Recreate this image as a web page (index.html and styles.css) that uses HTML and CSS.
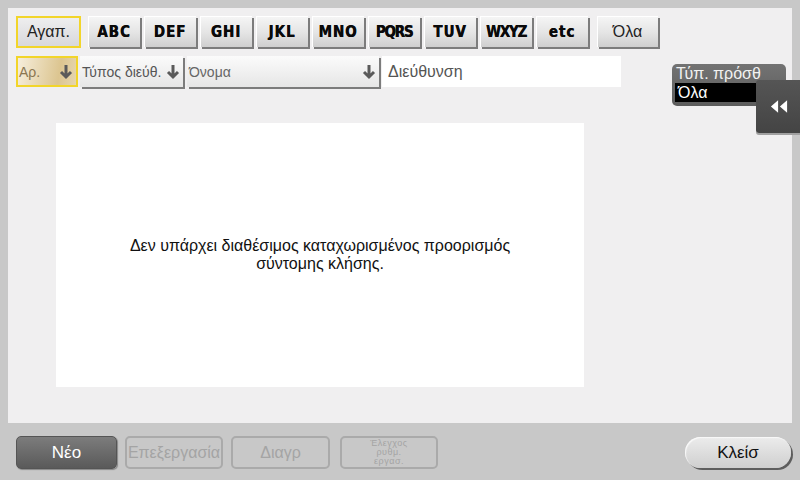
FILE: index.html
```html
<!DOCTYPE html>
<html lang="el">
<head>
<meta charset="utf-8">
<title>Προορισμοί</title>
<link rel="stylesheet" href="styles.css">
</head>
<body>
<div class="screen">
  <div class="panel">
    <div class="tabs">
      <button class="tab fav">Αγαπ.</button>
      <button class="tab letter">ABC</button>
      <button class="tab letter">DEF</button>
      <button class="tab letter">GHI</button>
      <button class="tab letter">JKL</button>
      <button class="tab letter">MNO</button>
      <button class="tab letter narrow">PQRS</button>
      <button class="tab letter">TUV</button>
      <button class="tab letter narrow">WXYZ</button>
      <button class="tab letter">etc</button>
      <button class="tab all">Όλα</button>
    </div>
    <div class="sortrow">
      <div class="sort num selected"><span>Αρ.</span><svg class="arrow" viewBox="0 0 14 16"><path d="M7 1v12M2 8l5 5 5-5" fill="none" stroke="#5a5a5a" stroke-width="3"/></svg></div>
      <div class="sort type"><span>Τύπος διεύθ.</span><svg class="arrow" viewBox="0 0 14 16"><path d="M7 1v12M2 8l5 5 5-5" fill="none" stroke="#5a5a5a" stroke-width="3"/></svg></div>
      <div class="sort name"><span>Όνομα</span><svg class="arrow" viewBox="0 0 14 16"><path d="M7 1v12M2 8l5 5 5-5" fill="none" stroke="#5a5a5a" stroke-width="3"/></svg></div>
      <div class="sort addr"><span>Διεύθυνση</span></div>
    </div>
    <div class="list">
      <p>Δεν υπάρχει διαθέσιμος καταχωρισμένος προορισμός<br>σύντομης κλήσης.</p>
    </div>
    <div class="filter">
      <div class="filter-title">Τύπ. πρόσθ</div>
      <div class="filter-value">Όλα</div>
    </div>
    <button class="collapse"><svg viewBox="0 0 20 14" width="18" height="13"><path d="M9 0v14L1 7z M19 0v14L11 7z" fill="#fff"/></svg></button>
  </div>
  <div class="bottombar">
    <button class="btn primary">Νέο</button>
    <button class="btn disabled w98">Επεξεργασία</button>
    <button class="btn disabled w99">Διαγρ</button>
    <button class="btn disabled small w98">Έλεγχος<br>ρυθμ.<br>εργασ.</button>
    <span class="spacer"></span>
    <button class="btn close">Κλείσ</button>
  </div>
</div>
</body>
</html>
```

FILE: styles.css
```css
* { box-sizing: border-box; }
html, body { margin: 0; padding: 0; }
body {
  width: 800px;
  height: 480px;
  background: #c8c8c8;
  font-family: "Liberation Sans", Arial, sans-serif;
  overflow: hidden;
}
button { font-family: inherit; padding: 0; cursor: pointer; }
.screen { width: 800px; height: 480px; padding-top: 8px; }
.panel {
  position: relative;
  margin-left: 8px;
  width: 784px;
  height: 415px;
  background: #f0eff0;
  padding: 8px 8px 0 8px;
}
.tabs { display: flex; height: 32px; align-items: flex-start; }
.tab {
  height: 31px;
  border: none;
  background: linear-gradient(#f6f6f6 0%, #e4e4e4 55%, #cfcfcf 100%);
  box-shadow: 2px 2px 0 #7c7c7c, inset 1px 1px 0 #ffffff;
  color: #111;
  margin-right: 4px;
}
.tab.fav {
  width: 65px;
  height: 32px;
  margin-right: 7px;
  border: 2px solid #f2d52a;
  box-shadow: none;
  background: linear-gradient(#eeeeee, #d8d8dc);
  font-size: 16px;
  color: #222;
}
.tab.letter {
  width: 52px;
  font-family: "DejaVu Sans Condensed", "Liberation Sans", sans-serif;
  font-weight: bold;
  font-size: 15px;
  letter-spacing: 1px;
  color: #0a0a0a;
  text-shadow: 0.4px 0 0 #0a0a0a;
}
.tab.letter.narrow { letter-spacing: -1.2px; font-size: 15px; }
.tab.all { width: 61px; margin-left: 5px; font-size: 16px; color: #222; }

.sortrow { display: flex; margin-top: 8px; height: 32px; align-items: flex-start; }
.sort {
  height: 31px;
  display: flex;
  align-items: center;
  justify-content: space-between;
  font-size: 14px;
  color: #555;
  background: linear-gradient(#fbfbfb, #e6e6e6);
  box-shadow: 2px 2px 0 #7c7c7c;
  padding: 0 3px 0 2px;
  margin-right: 4px;
}
.sort .arrow { width: 14px; height: 16px; display: block; flex: none; }
.sort.num {
  width: 62px;
  margin-right: 2px;
  border: 2px solid #f2d52a;
  box-shadow: none;
  background: linear-gradient(100deg, #f6eedc 0%, #dcc590 70%, #e6d6b0 100%);
  color: #8a7650;
  padding: 0 3px 0 1px;
}
.sort.type { width: 103px; }
.sort.name { width: 192px; color: #666; }
.sort.addr {
  width: 239px;
  margin-left: -1px;
  background: #fff;
  box-shadow: none;
  font-size: 16px;
  color: #555;
  padding-left: 6px;
}
.list {
  margin: 35px 0 0 40px;
  width: 528px;
  height: 264px;
  background: #fff;
  display: flex;
  align-items: center;
  justify-content: center;
}
.list p {
  margin: 0;
  text-align: center;
  font-size: 16px;
  line-height: 18px;
  color: #111;
}
.filter {
  position: absolute;
  left: 664px;
  top: 56px;
  width: 114px;
  height: 42px;
  background: linear-gradient(#737373, #5c5c5c);
  border-radius: 5px;
  padding: 1px 3px;
}
.filter-title { color: #f2f2f2; font-size: 16px; line-height: 18px; padding-left: 1px; }
.filter-value {
  background: #000;
  color: #fff;
  font-size: 16px;
  line-height: 19px;
  width: 84px;
  padding-left: 3px;
}
.collapse {
  position: absolute;
  left: 748px;
  top: 72px;
  width: 44px;
  height: 53px;
  border: none;
  border-radius: 3px 0 0 3px;
  background: linear-gradient(#555, #444);
  box-shadow: 0 2px 0 #a0a0a0;
  display: flex;
  align-items: center;
  justify-content: center;
}
.collapse svg { display: block; margin-left: 2px; }

.bottombar {
  display: flex;
  align-items: flex-start;
  padding: 13px 7px 0 16px;
  height: 57px;
}
.btn {
  height: 33px;
  border-radius: 5px;
  font-size: 16px;
  margin-right: 8px;
}
.btn.primary {
  width: 101px;
  border: 1px solid #555;
  background: linear-gradient(#7c7c7c, #5a5a5a);
  color: #fff;
  box-shadow: 1px 1px 1px #888;
  font-size: 17px;
}
.btn.disabled {
  border: 2px solid #aaaaaa;
  background: #c8c8c8;
  color: #a4a4a4;
}
.btn.w98 { width: 98px; }
.btn.w99 { width: 99px; margin-right: 10px; }
.btn.small { font-size: 9px; line-height: 9px; letter-spacing: 0.5px; }
.spacer { flex: 1; }
.btn.close {
  width: 106px;
  height: 31px;
  margin-top: 1px;
  margin-right: 2px;
  border: none;
  border-radius: 16px;
  background: linear-gradient(#ececec, #cfcfcf);
  box-shadow: 2px 2px 0 #5e5e5e, inset 1px 1px 1px #fafafa;
  color: #111;
  font-size: 17px;
}
```
